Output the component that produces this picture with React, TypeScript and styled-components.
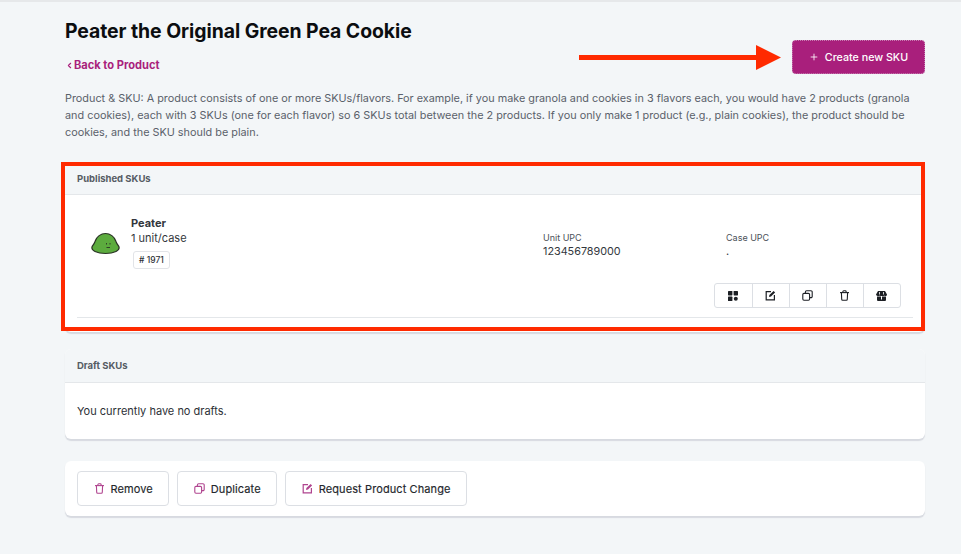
import React from "react";
import styled, { createGlobalStyle } from "styled-components";
import { Plus, ChevronLeft } from "lucide-react";

const Global = createGlobalStyle`
  html, body { margin: 0; padding: 0; background: #f3f6f8; }
  body { font-family: Inter, "Liberation Sans", sans-serif; width: 961px; height: 554px; overflow: hidden; }
  * { box-sizing: border-box; }
`;

const Page = styled.main`
  position: relative;
  width: 961px;
  height: 554px;
  border-top: 2px solid #e6e8ea;
  padding: 16px 36px 0 65px;
  background: #f3f6f8;
`;

const Title = styled.h1`
  margin: 0;
  font-size: 19.4px;
  line-height: 27px;
  font-weight: 700;
  color: #0b0d10;
  letter-spacing: -0.05px;
`;

const HeaderRow = styled.div`
  display: flex;
  justify-content: space-between;
  align-items: flex-start;
  height: 45px;
`;

const BackLink = styled.a`
  display: flex;
  align-items: center;
  margin-top: 12px;
  font-size: 11.1px;
  line-height: 16px;
  font-weight: 700;
  color: #a91f7c;
`;

const CreateButton = styled.button`
  display: flex;
  align-items: center;
  justify-content: center;
  gap: 6px;
  width: 133px;
  height: 34px;
  margin-top: -5px;
  border: 1px dotted #c77fb2;
  border-radius: 4px;
  background: #a91f7c;
  color: #fff;
  font: 500 10.7px Inter, sans-serif;
`;

const Intro = styled.p`
  margin: 0;
  width: 852px;
  font-size: 10.85px;
  line-height: 17px;
  color: #5a616a;
`;

const Card = styled.section<{ $top: number }>`
  margin-top: ${p => p.$top}px;
  border-radius: 6px;
  background: #fff;
  box-shadow: 0 1.5px 1px #d7dae0;
`;

const CardHead = styled.h2`
  margin: 0;
  height: 34px;
  padding: 0 12px 1px;
  display: flex;
  align-items: center;
  background: #f3f6f8;
  border-bottom: 1px solid #e4e7ea;
  border-radius: 6px 6px 0 0;
  font-size: 9.5px;
  font-weight: 700;
  color: #565c64;
`;

const PublishedHead = styled(CardHead)`
  height: 29px;
  padding-bottom: 3px;
`;

const SkuBody = styled.div`
  padding: 0 12px;
  height: 137px;
`;

const SkuRow = styled.div`
  display: grid;
  grid-template-columns: 466px 183px 1fr;
  height: 123px;
  border-bottom: 1px solid #e4e7ea;
  position: relative;
`;

const SkuMain = styled.div`
  display: flex;
  padding: 21px 0 0 14px;
  gap: 11px;
`;

const Blob = styled.svg`
  width: 29px;
  height: 23px;
  margin-top: 16px;
  flex: none;
`;

const SkuName = styled.div`
  font-size: 11px;
  line-height: 15px;
  font-weight: 700;
  color: #33373d;
`;

const SkuUnit = styled.div`
  font-size: 11px;
  line-height: 15px;
  color: #33373d;
`;

const Tag = styled.span`
  display: inline-flex;
  align-items: center;
  height: 18px;
  margin: 5px 0 0 2px;
  padding: 0 5px;
  border: 1px solid #e2e4e8;
  border-radius: 3px;
  font-size: 8.5px;
  font-weight: 500;
  color: #2c3036;
`;

const Field = styled.div`
  padding-top: 37px;
`;

const FieldLabel = styled.div`
  font-size: 9px;
  line-height: 12px;
  color: #4b5058;
`;

const FieldValue = styled.div`
  font-size: 10.8px;
  line-height: 16px;
  color: #33373d;
`;

const IconGroup = styled.div`
  position: absolute;
  right: 12px;
  top: 88px;
  display: flex;
  height: 25px;
  border: 1px solid #dcdfe4;
  border-radius: 3px;
  background: #fff;
`;

const IconCell = styled.span`
  display: flex;
  align-items: center;
  justify-content: center;
  width: 37px;
  padding-right: 2px;
  color: #1c1f24;
  & + & { border-left: 1px solid #dcdfe4; }
`;

const EmptyText = styled.p`
  margin: 0;
  padding: 20px 12px 0;
  height: 56px;
  font-size: 11px;
  line-height: 16px;
  color: #2c3036;
`;

const ActionCard = styled(Card)`
  display: flex;
  gap: 8px;
  height: 55px;
  padding: 10px 12px;
`;

const ActionButton = styled.button`
  display: flex;
  align-items: center;
  justify-content: center;
  gap: 6px;
  height: 35px;
  padding: 0 15.5px;
  border: 1px solid #dcdfe4;
  border-radius: 4px;
  background: #fff;
  color: #24272c;
  font: 400 11px Inter, sans-serif;
  letter-spacing: 0.1px;
  -webkit-text-stroke: 0.15px #24272c;
  svg { color: #b0448f; }
`;

const RedBox = styled.div`
  position: absolute;
  left: 61px;
  top: 160px;
  width: 864px;
  height: 169px;
  border: 4px solid #ff2a00;
  pointer-events: none;
`;

const Arrow = styled.svg`
  position: absolute;
  left: 578px;
  top: 42px;
`;

const GridIcon = () => (
  <svg width="10" height="10" viewBox="0 0 10 10" fill="currentColor">
    <rect x="0" y="0" width="4.4" height="4.4" rx="0.6" />
    <rect x="5.6" y="0" width="4.4" height="4.4" rx="0.6" />
    <rect x="0" y="5.6" width="4.4" height="4.4" rx="0.6" />
    <circle cx="7.8" cy="7.8" r="2" />
  </svg>
);

const EditIcon = ({ size = 11 }: { size?: number }) => (
  <svg width={size} height={size} viewBox="0 0 11 11" fill="none" stroke="currentColor" strokeWidth="1.2">
    <path d="M6 1.6H1.2v8.2h8.2V5" />
    <path d="M4 7 4.4 5 8.6.9l1.5 1.5L6 6.6Z" fill="currentColor" stroke="none" />
  </svg>
);

const CopyIcon = ({ size = 11 }: { size?: number }) => (
  <svg width={size} height={size} viewBox="0 0 11 11" fill="none" stroke="currentColor" strokeWidth="1.1">
    <rect x="0.8" y="3.4" width="6.8" height="6.8" rx="1.2" />
    <path d="M3.4 3.4V2A1.2 1.2 0 0 1 4.6.8H9A1.2 1.2 0 0 1 10.2 2v4.4A1.2 1.2 0 0 1 9 7.6H7.6" />
  </svg>
);

const TrashIcon = ({ size = 11 }: { size?: number }) => (
  <svg width={size} height={size} viewBox="0 0 11 11" fill="none" stroke="currentColor" strokeWidth="1.1">
    <path d="M1 2.6h9" />
    <path d="M2.4 2.6l.3 6.6a1 1 0 0 0 1 1h3.6a1 1 0 0 0 1-1l.3-6.6" />
    <path d="M3.9 2.4V1.6a.8.8 0 0 1 .8-.8h1.6a.8.8 0 0 1 .8.8v.8" />
  </svg>
);

const StoreIcon = () => (
  <svg width="11" height="10" viewBox="0 0 11 10" fill="currentColor">
    <path d="M2 0h7l2 3.4c0 1-.8 1.6-1.6 1.6-.5 0-.9-.2-1.2-.6-.3.4-.8.6-1.3.6H5.100c-.5 0-1-.2-1.300-.6-.3.4-.7.6-1.200.6C1.800 5 0 4.400 0 3.400Z" />
    <path d="M1 5.600h4V8.500h1V5.600h4V9a1 1 0 0 1-1 1H2a1 1 0 0 1-1-1Z" />
    <path d="M3.500 1v2.500M7.500 1v2.500" stroke="#fff" strokeWidth=".8" />
  </svg>
);

export default function App() {
  return (
    <>
      <Global />
      <Page>
        <Title>Peater the Original Green Pea Cookie</Title>
        <HeaderRow>
          <BackLink><ChevronLeft size={9} strokeWidth={3} />Back to Product</BackLink>
          <CreateButton><Plus size={10} />Create new SKU</CreateButton>
        </HeaderRow>
        <Intro>
          Product &amp; SKU: A product consists of one or more SKUs/flavors. For example, if you make granola and cookies in 3 flavors each, you would have 2 products (granola and cookies), each with 3 SKUs (one for each flavor) so 6 SKUs total between the 2 products. If you only make 1 product (e.g., plain cookies), the product should be cookies, and the SKU should be plain.
        </Intro>

        <Card $top={25}>
          <PublishedHead>Published SKUs</PublishedHead>
          <SkuBody>
            <SkuRow>
              <SkuMain>
                <Blob viewBox="0 0 29 23">
                  <path d="M1 15C1.500 13.500 3 12.500 4 9.500 5.500 4.500 10 1.500 14.500 1.500S23.500 4.500 25 9.500c1 3 2.500 4 3 5.500.4 1.500-1 3.500-3 4.500-2.500 1.200-6 2-10.500 2s-8-.8-10.500-2C2 18.500.6 16.500 1 15Z" fill="#5cab3e" stroke="#2a3325" strokeWidth="1.200" />
                  <path d="M15.500 11v1.500M19 11v1.500M15.500 15.500h3.500" stroke="#2a3325" strokeWidth="0.900" fill="none" />
                </Blob>
                <div>
                  <SkuName>Peater</SkuName>
                  <SkuUnit>1 unit/case</SkuUnit>
                  <Tag># 1971</Tag>
                </div>
              </SkuMain>
              <Field>
                <FieldLabel>Unit UPC</FieldLabel>
                <FieldValue>123456789000</FieldValue>
              </Field>
              <Field>
                <FieldLabel>Case UPC</FieldLabel>
                <FieldValue>.</FieldValue>
              </Field>
              <IconGroup>
                <IconCell><GridIcon /></IconCell>
                <IconCell><EditIcon /></IconCell>
                <IconCell><CopyIcon /></IconCell>
                <IconCell><TrashIcon /></IconCell>
                <IconCell><StoreIcon /></IconCell>
              </IconGroup>
            </SkuRow>
          </SkuBody>
        </Card>

        <Card $top={17}>
          <CardHead>Draft SKUs</CardHead>
          <EmptyText>You currently have no drafts.</EmptyText>
        </Card>

        <ActionCard $top={22}>
          <ActionButton><TrashIcon /> Remove</ActionButton>
          <ActionButton><CopyIcon /> Duplicate</ActionButton>
          <ActionButton><EditIcon /> Request Product Change</ActionButton>
        </ActionCard>

        <RedBox />
        <Arrow width="205" height="28" viewBox="0 0 205 28">
          <path d="M1 13.500H178" stroke="#ff2a00" strokeWidth="5" fill="none" />
          <path d="M178 1 L203 13.500 L178 26 Z" fill="#ff2a00" />
        </Arrow>
      </Page>
    </>
  );
}
